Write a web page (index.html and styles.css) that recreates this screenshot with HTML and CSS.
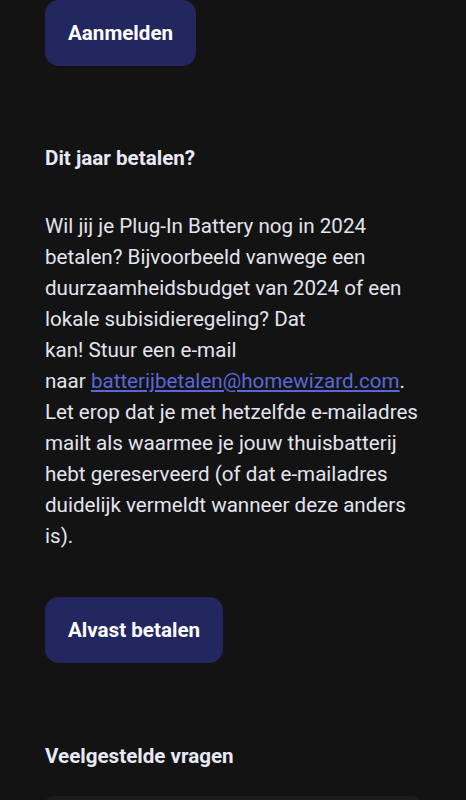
FILE: index.html
```html
<!DOCTYPE html>
<html lang="nl">
<head>
  <meta charset="UTF-8" />
  <meta name="viewport" content="width=device-width, initial-scale=1.0"/>
  <title>Plug-In Battery</title>
  <link rel="stylesheet" href="styles.css">
</head>
<body>
  <div class="container">
    <a class="btn" href="#">Aanmelden</a>

    <h2 class="section-title">Dit jaar betalen?</h2>
    <p class="text">Wil jij je Plug-In Battery nog in 2024 betalen? Bijvoorbeeld vanwege een duurzaamheidsbudget van 2024 of een lokale subisidieregeling? Dat<br>kan! Stuur een e-mail<br>naar <a href="#" class="mail-link">batterijbetalen@homewizard.com</a>. Let erop dat je met hetzelfde e-mailadres mailt als waarmee je jouw thuisbatterij hebt gereserveerd (of dat e-mailadres duidelijk vermeldt wanneer deze anders is).</p>
    <a class="btn" href="#">Alvast betalen</a>

    <h2 class="section-title faq-title">Veelgestelde vragen</h2>
    <div class="faq-card"></div>
  </div>
</body>
</html>
```

FILE: styles.css
```css
* {
  box-sizing: border-box;
}
body {
  font-family: Roboto, 'Noto Sans', sans-serif;
  background-color: #131313;
  color: #e3e4ee;
  margin: 0;
  padding: 0;
}
.container {
  padding: 0 45px;
  display: flex;
  flex-direction: column;
  align-items: flex-start;
}
.btn {
  display: inline-flex;
  align-items: center;
  height: 66px;
  padding: 0 23px;
  background-color: #23275f;
  color: #fff;
  font-size: 20.6px;
  font-weight: 700;
  text-decoration: none;
  border-radius: 14px;
}
.section-title {
  font-size: 20.6px;
  line-height: 28px;
  font-weight: 700;
  color: #e8e9f4;
  margin: 78px 0 0;
}
.text {
  font-size: 20.6px;
  line-height: 31px;
  margin: 39px 0 45px;
  width: 376px;
}
.mail-link {
  color: #5a67d8;
  text-decoration: underline;
}
.faq-title {
  margin-top: 79px;
}
.faq-card {
  align-self: stretch;
  margin: 26px 0 0;
  height: 80px;
  background-color: #1c1c1c;
  border-radius: 8px;
}
```
